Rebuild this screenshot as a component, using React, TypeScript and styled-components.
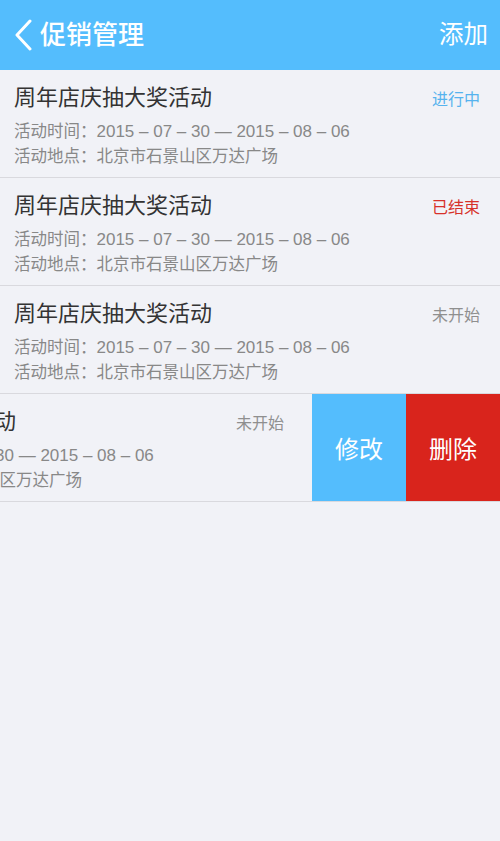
import React from "react";
import styled, { createGlobalStyle } from "styled-components";

const GlobalStyle = createGlobalStyle`
  html, body {
    margin: 0;
    padding: 0;
    background: #f1f2f7;
  }
  body {
    font-family: "Liberation Sans", "Noto Sans CJK SC", sans-serif;
  }
`;

const Page = styled.div`
  width: 500px;
  min-height: 841px;
  background: #f1f2f7;
  overflow: hidden;
`;

const Header = styled.header`
  height: 70px;
  background: #54bdfd;
  display: flex;
  align-items: center;
  justify-content: space-between;
  padding: 0 12px 0 14px;
  box-sizing: border-box;
  color: #fff;
`;

const BackButton = styled.div`
  display: flex;
  align-items: center;
  gap: 6px;
`;

const Title = styled.h1`
  margin: 0;
  font-size: 26px;
  font-weight: 500;
  line-height: 1;
`;

const AddButton = styled.span`
  font-size: 24.5px;
  line-height: 1;
`;

const List = styled.ul`
  list-style: none;
  margin: 0;
  padding: 0;
`;

const Row = styled.li`
  height: 108px;
  box-sizing: border-box;
  border-bottom: 1px solid #d9d9de;
  display: flex;
  overflow: hidden;
  gap: 8px;
`;

const Content = styled.div<{ $offset?: number }>`
  flex: 0 0 500px;
  box-sizing: border-box;
  margin-left: ${(p) => -(p.$offset ?? 0)}px;
  padding: 13px 20px 0 14px;
`;

const TopLine = styled.div`
  display: flex;
  align-items: center;
  justify-content: space-between;
  height: 30px;
  margin-bottom: 6px;
`;

const Name = styled.div`
  font-size: 22px;
  color: #333;
  line-height: 30px;
`;

const statusColors = {
  active: "#56b3ee",
  ended: "#d7312a",
  pending: "#8f8f8f",
};

const Status = styled.span<{ $kind: keyof typeof statusColors }>`
  font-size: 16px;
  color: ${(p) => statusColors[p.$kind]};
`;

const Meta = styled.div`
  font-size: 16.5px;
  line-height: 25px;
  color: #888;
  white-space: nowrap;
`;

const Dates = styled.span`
  font-size: 17px;
`;

const Actions = styled.div`
  display: flex;
  flex: 0 0 188px;
`;

const ActionButton = styled.button<{ $danger?: boolean }>`
  flex: 1;
  border: none;
  margin: 0;
  padding: 0;
  background: ${(p) => (p.$danger ? "#d9241c" : "#54bdfd")};
  color: #fff;
  font-family: "Liberation Sans", "Noto Sans CJK SC", sans-serif;
  font-size: 24px;
`;

type Promo = {
  name: string;
  status: string;
  kind: keyof typeof statusColors;
  swiped?: boolean;
};

const promos: Promo[] = [
  { name: "周年店庆抽大奖活动", status: "进行中", kind: "active" },
  { name: "周年店庆抽大奖活动", status: "已结束", kind: "ended" },
  { name: "周年店庆抽大奖活动", status: "未开始", kind: "pending" },
  { name: "周年店庆抽大奖活动", status: "未开始", kind: "pending", swiped: true },
];

export default function App() {
  return (
    <Page>
      <GlobalStyle />
      <Header>
        <BackButton>
          <svg width="20" height="32" viewBox="0 0 20 32">
            <polyline
              points="16,2 3,16 16,30"
              fill="none"
              stroke="#fff"
              strokeWidth="3"
              strokeLinecap="round"
              strokeLinejoin="round"
            />
          </svg>
          <Title>促销管理</Title>
        </BackButton>
        <AddButton>添加</AddButton>
      </Header>
      <List>
        {promos.map((p, i) => (
          <Row key={i}>
            <Content $offset={p.swiped ? 196 : 0}>
              <TopLine>
                <Name>{p.name}</Name>
                <Status $kind={p.kind}>{p.status}</Status>
              </TopLine>
              <Meta>
                活动时间：<Dates>2015 – 07 – 30 — 2015 – 08 – 06</Dates>
              </Meta>
              <Meta>活动地点：北京市石景山区万达广场</Meta>
            </Content>
            {p.swiped && (
              <Actions>
                <ActionButton>修改</ActionButton>
                <ActionButton $danger>删除</ActionButton>
              </Actions>
            )}
          </Row>
        ))}
      </List>
    </Page>
  );
}
